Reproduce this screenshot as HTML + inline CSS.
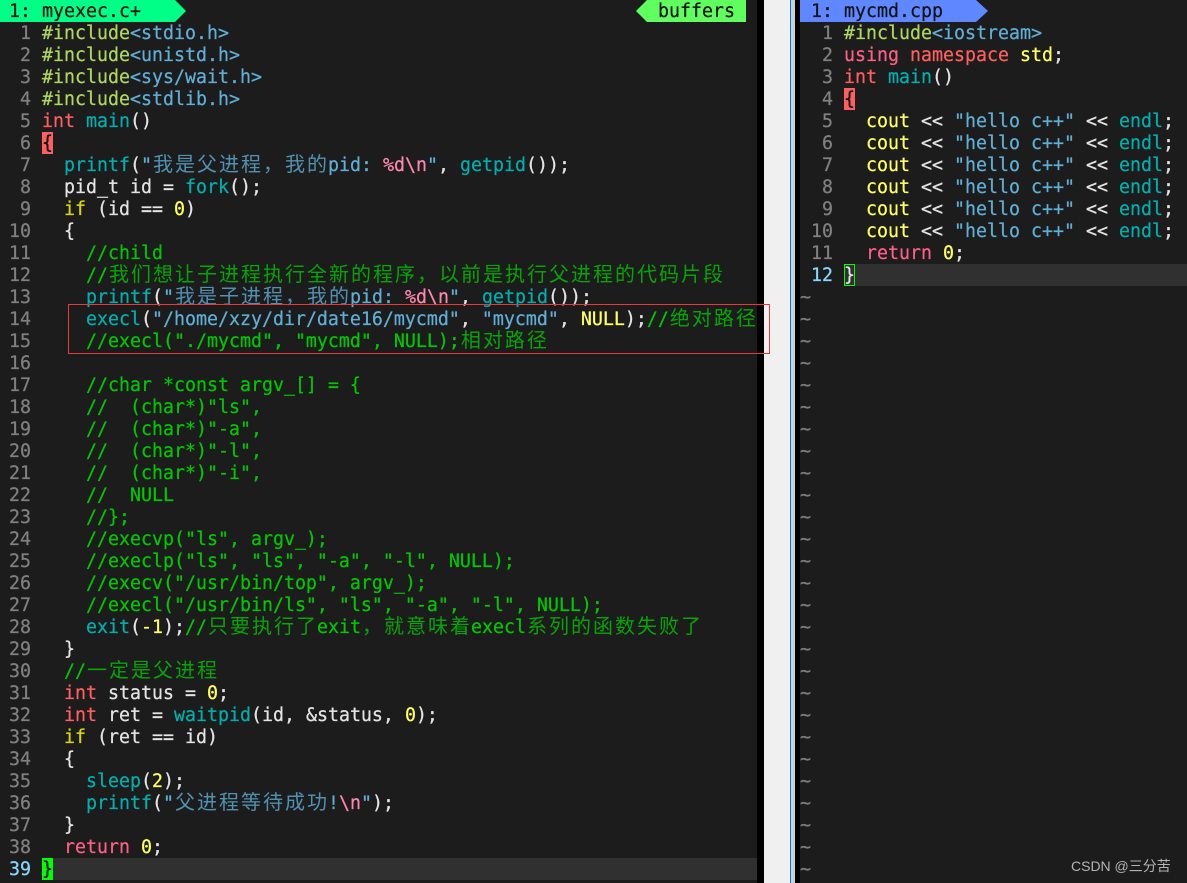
<!DOCTYPE html>
<html lang="zh"><head><meta charset="utf-8"><title>vim</title>
<style>
html,body{margin:0;padding:0;background:#1c1c1c}
#r{position:relative;width:1187px;height:883px;overflow:hidden;background:#1c1c1c;font-family:"DejaVu Sans Mono","Noto Sans CJK SC",monospace;font-size:18.27px;color:#e4e4e4}
#r div{position:absolute}
pre{position:absolute;margin:0;font:inherit;line-height:22px;white-space:pre;font-variant-ligatures:none;-webkit-text-stroke:.25px}
.n{color:#808080;text-align:right}
i{font-style:normal;font-family:"Noto Sans CJK SC",sans-serif;font-size:20px;letter-spacing:2px;line-height:0;position:relative;left:1px;opacity:.8;-webkit-text-stroke:0}
.p{color:#afd75f}.s{color:#5fafd7}.k{color:#ff5f5f}.f{color:#00afaf}.c{color:#00c800}.y{color:#ffff5f}.i{color:#d7d700}.e{color:#ff5f87}.x{color:#ff87af}
.b{color:#121212;line-height:22px;height:22px}
</style></head><body><div id="r">
<div style="left:757px;top:0;width:7px;height:883px;background:#000"></div>
<div style="left:764px;top:0;width:26px;height:883px;background:#f0f0f0"></div>
<div style="left:790px;top:0;width:1px;height:883px;background:#0078d7"></div>
<div style="left:791px;top:0;width:4px;height:883px;background:#d0d0d0"></div>
<div style="left:795px;top:0;width:5px;height:883px;background:#000"></div>
<div style="left:42px;top:858px;width:715px;height:22px;background:#303030"></div>
<div style="left:844px;top:264px;width:343px;height:22px;background:#303030"></div>
<div style="left:42px;top:132px;width:11px;height:22px;background:#ff5f5f"></div>
<div style="left:42px;top:858px;width:11px;height:22px;background:#00ff00"></div>
<div style="left:844px;top:88px;width:11px;height:22px;background:#ff5f5f"></div>
<div style="left:844px;top:264px;width:9px;height:20px;border:1px solid #00ff00"></div>
<svg style="position:absolute;left:0;top:0" width="1187" height="22"><polygon points="0,0 175,0 186,11 175,22 0,22" fill="#00ff87"/><polygon points="647,0 746,0 746,22 647,22 636,11" fill="#5fff5f"/><polygon points="800,0 976,0 988,11 976,22 800,22" fill="#5f87ff"/></svg>
<pre class="b" style="left:9px;top:1px">1: myexec.c+</pre>
<pre class="b" style="left:658px;top:1px">buffers</pre>
<pre class="b" style="left:811px;top:1px">1: mycmd.cpp</pre>
<pre class="n" style="left:0;top:23px;width:31px">1
2
3
4
5
6
7
8
9
10
11
12
13
14
15
16
17
18
19
20
21
22
23
24
25
26
27
28
29
30
31
32
33
34
35
36
37
38
<span style="color:#87d7ff">39</span></pre>
<pre style="left:42px;top:23px"><span class="p">#include</span><span class="s">&lt;stdio.h&gt;</span>
<span class="p">#include</span><span class="s">&lt;unistd.h&gt;</span>
<span class="p">#include</span><span class="s">&lt;sys/wait.h&gt;</span>
<span class="p">#include</span><span class="s">&lt;stdlib.h&gt;</span>
<span class="k">int</span> <span class="f">main</span>()
<span style="color:#000">{</span>
  <span class="f">printf</span>(<span class="s">"<i>我是父进程，我的</i>pid: </span><span class="x">%d\n</span><span class="s">"</span>, <span class="f">getpid</span>());
  pid_t id = <span class="f">fork</span>();
  <span class="i">if</span> (id == <span class="y">0</span>)
  {
    <span class="c">//child</span>
    <span class="c">//<i>我们想让子进程执行全新的程序，以前是执行父进程的代码片段</i></span>
    <span class="f">printf</span>(<span class="s">"<i>我是子进程，我的</i>pid: </span><span class="x">%d\n</span><span class="s">"</span>, <span class="f">getpid</span>());
    <span class="f">execl</span>(<span class="s">"/home/xzy/dir/date16/mycmd"</span>, <span class="s">"mycmd"</span>, <span class="y">NULL</span>);<span class="c">//<i>绝对路径</i></span>
    <span class="c">//execl("./mycmd", "mycmd", NULL);<i>相对路径</i></span>

    <span class="c">//char *const argv_[] = {</span>
    <span class="c">//  (char*)"ls",</span>
    <span class="c">//  (char*)"-a",</span>
    <span class="c">//  (char*)"-l",</span>
    <span class="c">//  (char*)"-i",</span>
    <span class="c">//  NULL</span>
    <span class="c">//};</span>
    <span class="c">//execvp("ls", argv_);</span>
    <span class="c">//execlp("ls", "ls", "-a", "-l", NULL);</span>
    <span class="c">//execv("/usr/bin/top", argv_);</span>
    <span class="c">//execl("/usr/bin/ls", "ls", "-a", "-l", NULL);</span>
    <span class="f">exit</span>(<span class="y">-1</span>);<span class="c">//<i>只要执行了</i>exit<i>，就意味着</i>execl<i>系列的函数失败了</i></span>
  }
  <span class="c">//<i>一定是父进程</i></span>
  <span class="k">int</span> status = <span class="y">0</span>;
  <span class="k">int</span> ret = <span class="f">waitpid</span>(id, &amp;status, <span class="y">0</span>);
  <span class="i">if</span> (ret == id)
  {
    <span class="f">sleep</span>(<span class="y">2</span>);
    <span class="f">printf</span>(<span class="s">"<i>父进程等待成功</i>!</span><span class="x">\n</span><span class="s">"</span>);
  }
  <span class="e">return</span> <span class="y">0</span>;
<span style="color:#000">}</span></pre>
<pre class="n" style="left:800px;top:23px;width:33px">1
2
3
4
5
6
7
8
9
10
11
<span style="color:#87d7ff">12</span></pre>
<pre style="left:844px;top:23px"><span class="p">#include</span><span class="s">&lt;iostream&gt;</span>
<span class="e">using</span> <span class="k">namespace</span> <span class="y">std</span>;
<span class="k">int</span> <span class="f">main</span>()
<span style="color:#000">{</span>
  <span class="y">cout</span> &lt;&lt; <span class="s">"hello c++"</span> &lt;&lt; <span class="f">endl</span>;
  <span class="y">cout</span> &lt;&lt; <span class="s">"hello c++"</span> &lt;&lt; <span class="f">endl</span>;
  <span class="y">cout</span> &lt;&lt; <span class="s">"hello c++"</span> &lt;&lt; <span class="f">endl</span>;
  <span class="y">cout</span> &lt;&lt; <span class="s">"hello c++"</span> &lt;&lt; <span class="f">endl</span>;
  <span class="y">cout</span> &lt;&lt; <span class="s">"hello c++"</span> &lt;&lt; <span class="f">endl</span>;
  <span class="y">cout</span> &lt;&lt; <span class="s">"hello c++"</span> &lt;&lt; <span class="f">endl</span>;
  <span class="e">return</span> <span class="y">0</span>;
}</pre>
<pre class="n" style="left:800px;top:287px;text-align:left">~
~
~
~
~
~
~
~
~
~
~
~
~
~
~
~
~
~
~
~
~
~
~
~
~
~
~</pre>
<div style="left:1071px;top:858px;font:14px/17px 'Liberation Sans','Noto Sans CJK SC',sans-serif;color:#b4b4b4;white-space:nowrap">CSDN @三分苦</div>
<div style="left:68px;top:304px;width:700px;height:48px;border:1px solid #e83a3a"></div>
</div></body></html>
